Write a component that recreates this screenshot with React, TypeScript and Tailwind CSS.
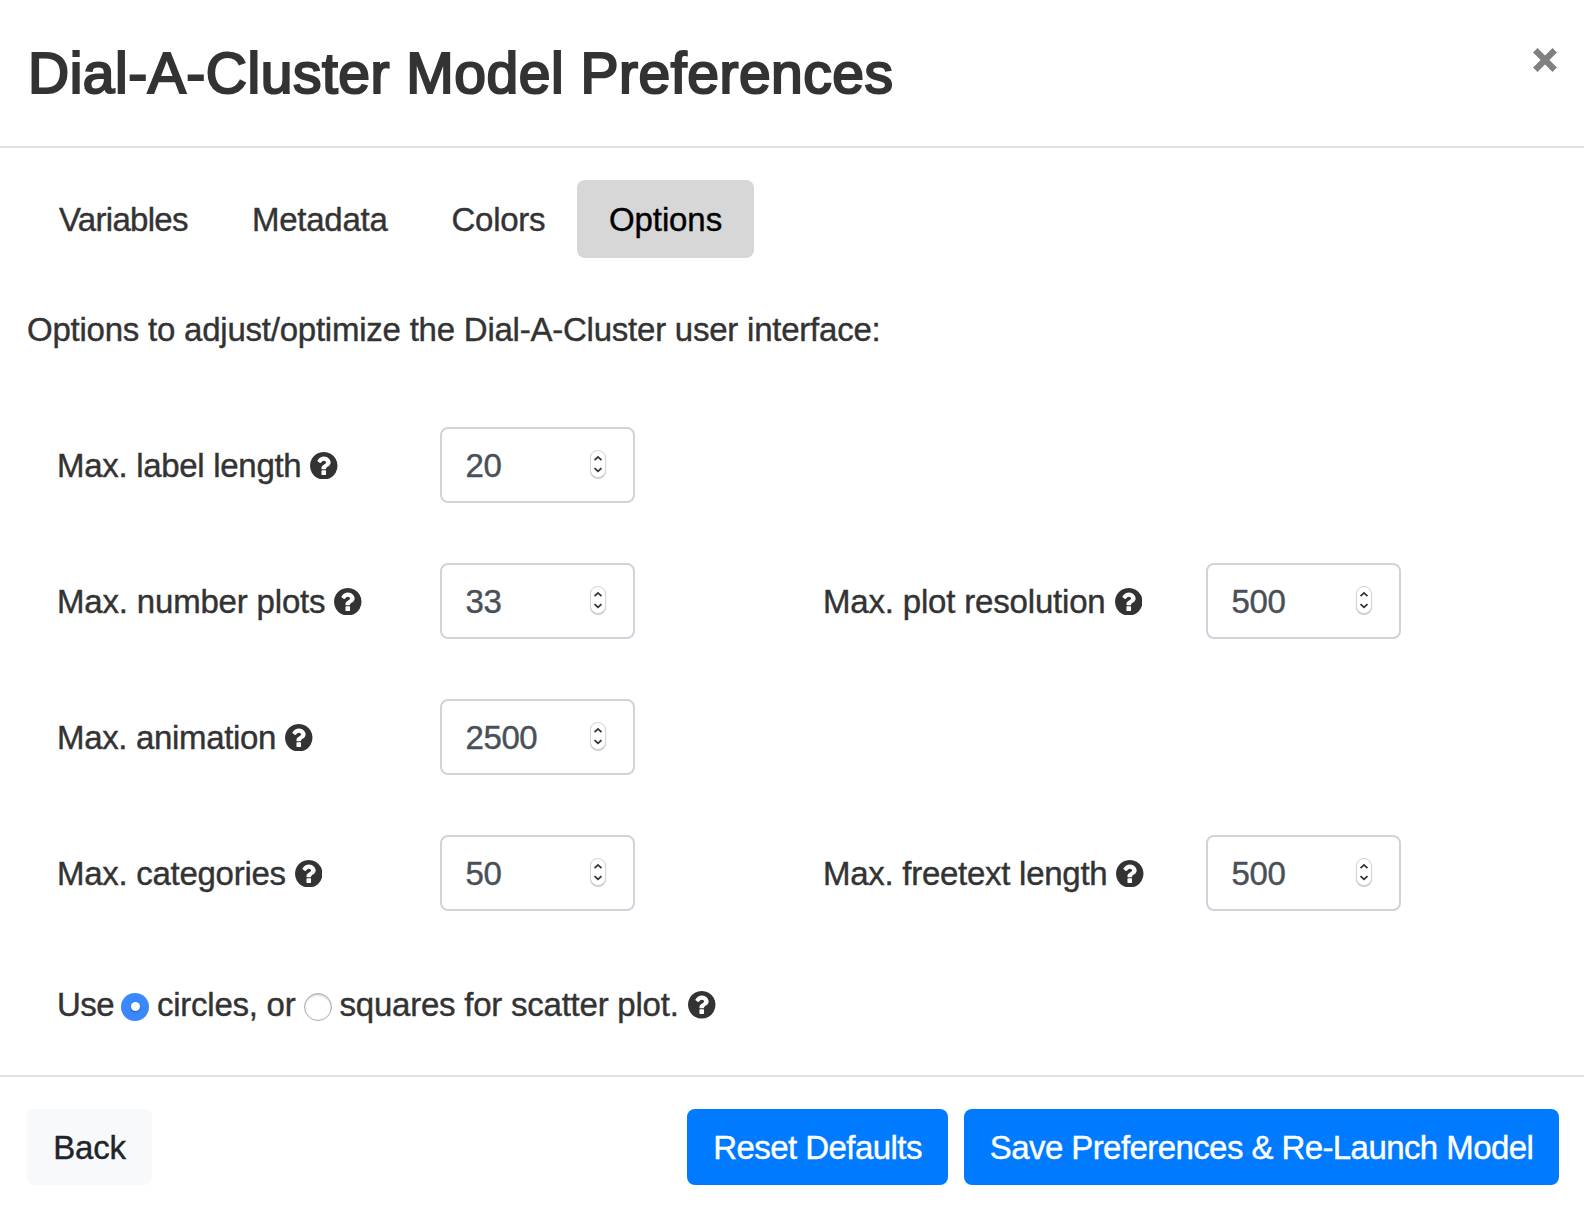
import { useState } from "react";

function HelpIcon({ className = "" }: { className?: string }) {
  return (
    <svg viewBox="128 128 1536 1536" className={"size-[27.5px] shrink-0 fill-[#333333] " + className} aria-label="Help">
      <path d="M1024 1376v-192q0-14-9-23t-23-9h-192q-14 0-23 9t-9 23v192q0 14 9 23t23 9h192q14 0 23-9t9-23zm256-672q0-88-55.500-163t-138.500-116-170-41q-243 0-371 213-15 24 8 42l132 100q7 6 19 6 16 0 25-12 53-68 86-92 34-24 86-24 48 0 85.500 26t37.500 59q0 38-20 61t-68 45q-63 28-115.500 86.500t-52.500 125.500v36q0 14 9 23t23 9h192q14 0 23-9t9-23q0-19 21.500-49.500t54.500-49.500q32-18 49-28.500t46-35 44.500-48 28-60.500 12.500-81zm384 192q0 209-103 385.500t-279.500 279.500-385.500 103-385.500-103-279.500-279.500-103-385.500 103-385.500 279.500-279.500 385.500-103 385.500 103 279.500 279.500 103 385.500z" />
    </svg>
  );
}

function NumberBox({ value }: { value: string }) {
  return (
    <div className="relative h-[76px] w-[195px] shrink-0">
      <input
        type="text"
        defaultValue={value}
        className="h-full w-full rounded-lg border-2 border-[#ced4da] bg-white pt-0.5 pr-14 pl-[23.5px] tracking-[-0.4px] text-[#495057] outline-none [-webkit-text-stroke:0.4px_#495057]"
      />
      <span className="absolute top-[23px] right-[29px] flex h-7 w-4 flex-col items-center justify-center rounded-full border border-[#d4d4d4] bg-white shadow-[0_1px_1px_rgba(0,0,0,0.22)]">
        <svg viewBox="0 0 14 26" className="h-[26px] w-3.5 shrink-0 fill-none stroke-[#333333] stroke-[1.8]">
          <path d="M3.500 9.100 7 5.900l3.500 3.200M3.500 17.100 7 20.300l3.500-3.200" />
        </svg>
      </span>
    </div>
  );
}

function Field({ label, value, tracking }: { label: string; value: string; tracking: string }) {
  return (
    <div className="flex w-[766px] shrink-0 items-center">
      <div className="flex w-[383px] items-center">
        <span className={"pt-0.5 whitespace-nowrap " + tracking}>{label}</span>
        <HelpIcon className="mt-px ml-[9px]" />
      </div>
      <NumberBox value={value} />
    </div>
  );
}

export default function App() {
  const [shape, setShape] = useState("circles");
  const dot = (name: string) =>
    shape === name ? (
      <button type="button" aria-label={name} onClick={() => setShape(name)} className="mt-[3px] flex size-7 shrink-0 items-center justify-center rounded-full bg-[#3a88fd]">
        <span className="size-[9px] rounded-full bg-white shadow-[0_1px_2px_rgba(0,0,0,0.35)]" />
      </button>
    ) : (
      <button type="button" aria-label={name} onClick={() => setShape(name)} className="mt-[3px] size-7 shrink-0 rounded-full border border-[#adadad] bg-white shadow-[inset_0_1px_2px_rgba(0,0,0,0.25)]" />
    );

  return (
    <div className="flex h-[1212px] w-[1584px] flex-col bg-white font-['Liberation_Sans',sans-serif] text-[33px] leading-[48px] text-[#333333] [-webkit-text-stroke:0.4px]">
      <header className="flex h-[148px] items-start justify-between border-b-2 border-[#dee2e6] pt-8 pr-[27.5px] pl-[28px]">
        <h1 className="text-[57px] leading-[83px] font-normal tracking-[0.52px] whitespace-nowrap [-webkit-text-stroke:2.2px_#333333]">
          Dial-A-Cluster Model Preferences
        </h1>
        <button type="button" aria-label="Close" className="mt-[15.5px]">
          <svg viewBox="0 0 23 23" className="size-[24px] fill-none stroke-[#808080] stroke-[6]">
            <path d="M2.200 2.200 20.800 20.800M20.800 2.200 2.200 20.800" />
          </svg>
        </button>
      </header>

      <main className="flex flex-1 flex-col pt-8 pl-[27px]">
        <nav className="flex h-[78px] *:flex *:items-center *:rounded-lg *:pt-0.5 *:pl-8 *:whitespace-nowrap">
          <a className="w-[193px] tracking-[-0.7px]">Variables</a>
          <a className="w-[199.500px] tracking-[-0.25px]">Metadata</a>
          <a className="w-[157.500px] tracking-[-0.27px]">Colors</a>
          <a className="w-[177px] bg-[#d7d7d7] tracking-[-0.1px] text-black">Options</a>
        </nav>

        <p className="mt-12 tracking-[-0.23px]">Options to adjust/optimize the Dial-A-Cluster user interface:</p>

        <div className="mt-[73px] ml-[30px] flex flex-col gap-[60px]">
          <div className="flex">
            <Field label="Max. label length" value="20" tracking="tracking-[-0.3px]" />
          </div>
          <div className="flex">
            <Field label="Max. number plots" value="33" tracking="tracking-[-0.18px]" />
            <Field label="Max. plot resolution" value="500" tracking="tracking-[-0.18px]" />
          </div>
          <div className="flex">
            <Field label="Max. animation" value="2500" tracking="tracking-[-0.34px]" />
          </div>
          <div className="flex">
            <Field label="Max. categories" value="50" tracking="tracking-[-0.28px]" />
            <Field label="Max. freetext length" value="500" tracking="tracking-[-0.27px]" />
          </div>
        </div>

        <div className="mt-[70px] ml-[30px] flex items-center whitespace-nowrap">
          <span className="w-[64px] tracking-[-0.6px]">Use</span>
          {dot("circles")}
          <span className="ml-2 w-[147px] tracking-[-0.25px]">circles, or</span>
          {dot("squares")}
          <span className="ml-[7.500px] w-[340px] tracking-[-0.23px]">squares for scatter plot.</span>
          <HelpIcon className="ml-[8.500px]" />
        </div>
      </main>

      <footer className="flex h-[137px] items-start border-t-2 border-[#dee2e6] pt-8 pr-[25px] pl-[27px]">
        <button type="button" className="h-[76px] w-[125px] rounded-lg bg-[#f8f9fa] pt-0.5 tracking-[-0.2px] text-[#212529]">Back</button>
        <button type="button" className="ml-auto h-[76px] w-[261px] rounded-lg bg-[#007bff] pt-0.5 tracking-[-0.55px] text-white">Reset Defaults</button>
        <button type="button" className="ml-4 h-[76px] w-[595px] rounded-lg bg-[#007bff] pt-0.5 tracking-[-0.58px] whitespace-nowrap text-white">
          Save Preferences &amp; Re-Launch Model
        </button>
      </footer>
    </div>
  );
}
